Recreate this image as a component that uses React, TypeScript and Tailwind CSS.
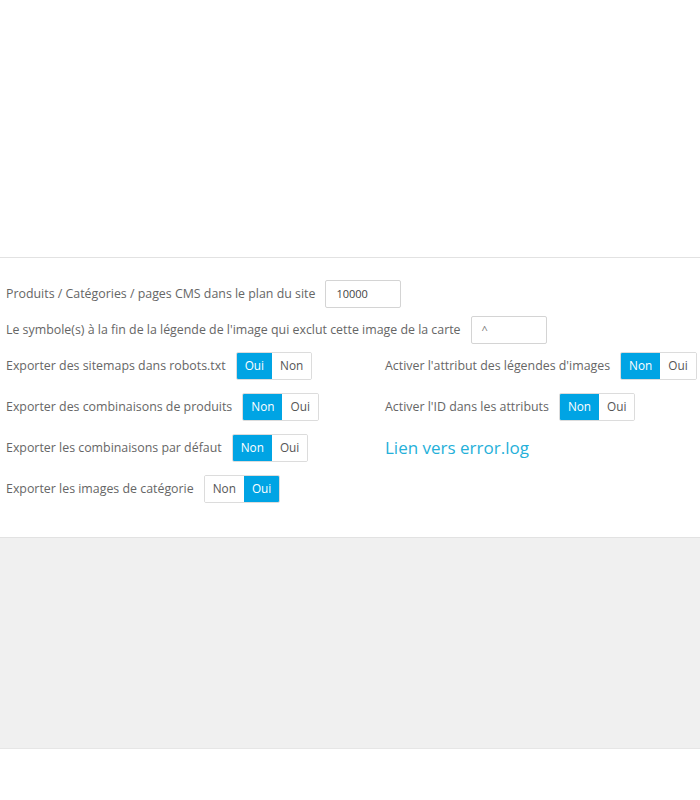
import React from "react"

function Toggle({ options, active }: { options: string[]; active: number }) {
    return (
        <div className="flex h-[28px] rounded-[2px] border border-[#dcdcdc] overflow-hidden text-[11.8px] shrink-0">
            {options.map((x, index) =>
                <span
                    key={index}
                    className={index === active
                        ? "flex items-center px-[8px] bg-[#00a4e4] text-white"
                        : "flex items-center px-[8px] bg-white text-[#555]"}>
                    {x}
                </span>)}
        </div>
    )
}

function Field({ label, children }: { label: string; children: React.ReactNode }) {
    return (
        <div className="flex items-center gap-[10px] h-[28px]">
            <span className="whitespace-nowrap">{label}</span>
            {children}
        </div>
    )
}

export default function App() {
    return (
        <div className="w-[700px] h-[800px] bg-white text-[12.38px] text-[#666] font-['Open_Sans',sans-serif]">
            <div className="h-[257px]" />
            <section className="border-t border-b border-[#e2e2e2] pl-[6px] pt-[22px] pb-[34px] flex flex-col">
                <Field label="Produits / Catégories / pages CMS dans le plan du site">
                    <div className="w-[76px] h-[28px] border border-[#d4d4d4] rounded-[2px] flex items-center px-[10px] text-[11px] text-[#444]">10000</div>
                </Field>
                <div className="mt-[8px]">
                    <Field label="Le symbole(s) à la fin de la légende de l'image qui exclut cette image de la carte">
                        <div className="w-[76px] h-[28px] border border-[#d4d4d4] rounded-[2px] flex items-center px-[10px] text-[11px] text-[#777]">^</div>
                    </Field>
                </div>
                <div className="mt-[8px] grid grid-cols-[379px_1fr]">
                    <div className="flex flex-col gap-[13px]">
                        <Field label="Exporter des sitemaps dans robots.txt"><Toggle options={["Oui", "Non"]} active={0} /></Field>
                        <Field label="Exporter des combinaisons de produits"><Toggle options={["Non", "Oui"]} active={0} /></Field>
                        <Field label="Exporter les combinaisons par défaut"><Toggle options={["Non", "Oui"]} active={0} /></Field>
                        <Field label="Exporter les images de catégorie"><Toggle options={["Non", "Oui"]} active={1} /></Field>
                    </div>
                    <div className="flex flex-col gap-[13px]">
                        <Field label="Activer l'attribut des légendes d'images"><Toggle options={["Non", "Oui"]} active={0} /></Field>
                        <Field label="Activer l'ID dans les attributs"><Toggle options={["Non", "Oui"]} active={0} /></Field>
                        <div className="h-[28px] flex items-center text-[17px] text-[#25b0d9]">Lien vers error.log</div>
                    </div>
                </div>
            </section>
            <div className="h-[211px] bg-[#f0f0f0] border-b border-[#e6e6e6]" />
        </div>
    )
}
